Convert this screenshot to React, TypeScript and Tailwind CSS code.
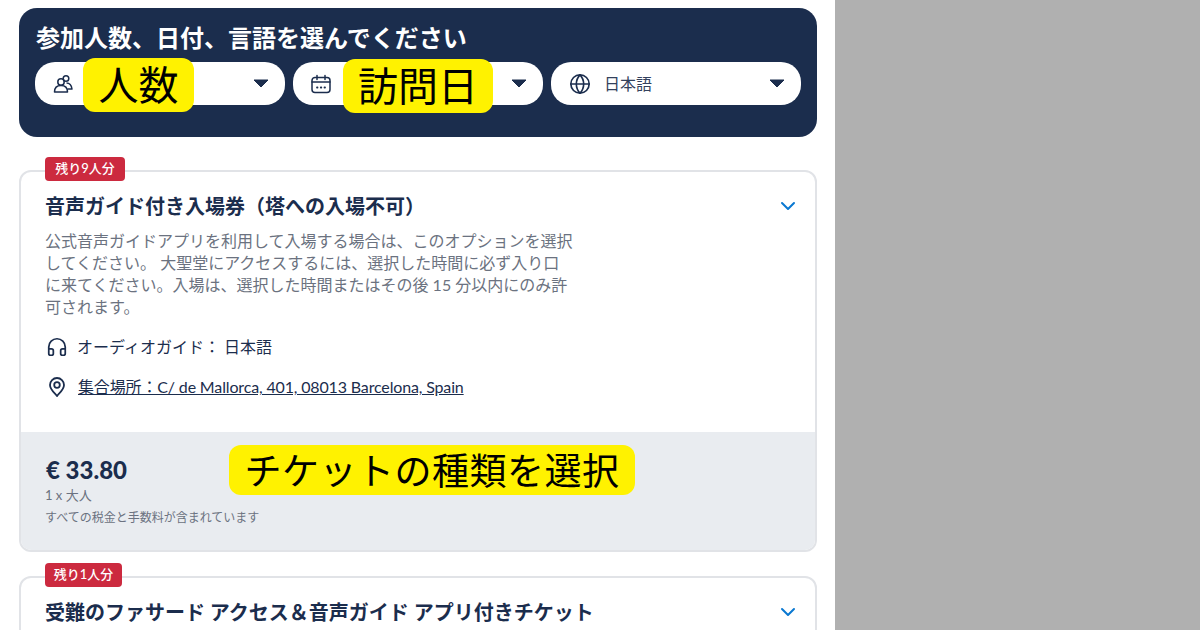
import { ChevronDown, Globe, Headphones } from "lucide-react";

const font = "font-['Lato','Noto_Sans_CJK_JP',sans-serif]";

function Caret() {
  return (
    <svg width="16" height="9" viewBox="0 0 16 9" className="ml-auto shrink-0">
      <path d="M1 1h14l-7 7z" fill="#1b2d4d" stroke="#1b2d4d" strokeLinejoin="round" />
    </svg>
  );
}

function PeopleIcon() {
  return (
    <svg width="20" height="20" viewBox="0 0 20 20" fill="none" stroke="#1b2d4d" strokeWidth="1.500" strokeLinejoin="round">
      <circle cx="8" cy="8" r="3.200" />
      <circle cx="13" cy="4.500" r="2.800" />
      <path d="M1.500 18c0-4 2.500-6.500 6.500-6.500s6.500 2.500 6.500 6.500z" />
      <path d="M13.500 9c3 0 5 2.500 5.500 6h-4.500" />
    </svg>
  );
}

function CalendarIcon() {
  return (
    <svg width="20" height="20" viewBox="0 0 20 20" fill="none" stroke="#1b2d4d" strokeWidth="1.500" strokeLinecap="round">
      <rect x="1" y="3.500" width="18" height="15" rx="3" />
      <path d="M1 8h18M6 1.500v4M14 1.500v4" />
      <path d="M6 13.500h.5M9.800 13.500h.5M13.500 13.500h.5" strokeWidth="1.800" />
    </svg>
  );
}

function PinIcon() {
  return (
    <svg width="20" height="20" viewBox="0 0 20 20" fill="none" stroke="#1b2d4d" strokeWidth="1.800" className="ml-[2px]">
      <path d="M10 19c-1-1.800-7-6-7-11a7 7 0 0 1 14 0c0 5-6 9.200-7 11z" strokeLinejoin="round" />
      <circle cx="10" cy="8" r="2.800" />
    </svg>
  );
}

function Select({ icon, label }: { icon: React.ReactNode; label?: string }) {
  return (
    <div className="flex h-[43px] w-[250px] shrink-0 items-center rounded-[20px] bg-white pl-[18px] pr-[16px]">
      {icon}
      {label && <span className="ml-[13px] text-[16px] text-[#33415c]">{label}</span>}
      <Caret />
    </div>
  );
}

function Badge({ text, width }: { text: string; width: string }) {
  return (
    <span className={`absolute left-[24px] top-[-15px] flex h-[24px] items-center justify-center rounded-[4px] bg-[#cc2a3f] text-[13px] font-medium text-white ${width}`}>
      {text}
    </span>
  );
}

export default function App() {
  return (
    <div className={`relative flex h-[630px] w-[1200px] overflow-hidden bg-white ${font}`}>
      <div className="w-[835px] shrink-0 pl-[19px] pr-[18px] pt-[8px]">
        <div className="h-[129px] rounded-[18px] bg-[#1b2d4d] px-[16px] pt-[14px]">
          <h2 className="ml-[1px] text-[24px] font-bold leading-[32px] text-white">参加人数、日付、言語を選んでください</h2>
          <div className="mt-[8px] flex gap-[8px]">
            <Select icon={<PeopleIcon />} />
            <Select icon={<CalendarIcon />} />
            <Select icon={<Globe size={22} strokeWidth={1.800} color="#1b2d4d" />} label="日本語" />
          </div>
        </div>

        <div className="relative mt-[33px] h-[382px] rounded-[12px] border-2 border-[#e1e3e7]">
          <Badge text="残り9人分" width="w-[80px]" />
          <div className="h-[260px] px-[24px] pt-[20px]">
            <div className="flex items-center justify-between">
              <h3 className="text-[20px] font-bold leading-[28px] text-[#1b2d4d]">音声ガイド付き入場券（塔への入場不可）</h3>
              <ChevronDown size={24} strokeWidth={2} color="#0a78d1" className="mr-[-9px]" />
            </div>
            <p className="mt-[10px] w-[528px] text-[16px] leading-[22px] text-[#6b7280]">
              公式音声ガイドアプリを利用して入場する場合は、このオプションを選択してください。 大聖堂にアクセスするには、選択した時間に必ず入り口に来てください。入場は、選択した時間またはその後 15 分以内にのみ許可されます。
            </p>
            <div className="mt-[18px] flex items-center gap-[9px] text-[16px] leading-[22px] text-[#1b2d4d]">
              <Headphones size={22} strokeWidth={1.900} className="ml-[1px]" />
              <span>オーディオガイド： 日本語</span>
            </div>
            <div className="mt-[18px] flex items-center gap-[11px] text-[16px] leading-[22px] text-[#1b2d4d]">
              <PinIcon />
              <span className="tracking-[-0.15px] underline">集合場所：C/ de Mallorca, 401, 08013 Barcelona, Spain</span>
            </div>
          </div>
          <div className="h-[118px] rounded-b-[10px] bg-[#e9ecf0] px-[24px] pt-[24px]">
            <div className="ml-[1px] text-[24px] font-black leading-[28px] text-[#1b2d4d]">€ 33.80</div>
            <div className="mt-[1px] text-[13px] leading-[20px] text-[#6b7280]">1 x 大人</div>
            <div className="mt-[5px] text-[12px] leading-[16px] text-[#6b7280]">すべての税金と手数料が含まれています</div>
          </div>
        </div>

        <div className="relative mt-[24px] h-[200px] rounded-[12px] border-2 border-[#e1e3e7]">
          <Badge text="残り1人分" width="w-[77px]" />
          <div className="flex items-center justify-between px-[24px] pt-[20px]">
            <h3 className="text-[20px] font-bold leading-[28px] text-[#1b2d4d]">受難のファサード アクセス＆音声ガイド アプリ付きチケット</h3>
            <ChevronDown size={24} strokeWidth={2} color="#0a78d1" className="mr-[-9px]" />
          </div>
        </div>
      </div>
      <div className="flex-1 bg-[#b0b0b0]" />

      <div className="absolute left-[83px] top-[58px] flex h-[54px] w-[111px] items-center justify-center rounded-[12px] bg-[#fff200] text-[40px] leading-none text-black">人数</div>
      <div className="absolute left-[343px] top-[59px] flex h-[54px] w-[150px] items-center justify-center rounded-[12px] bg-[#fff200] text-[40px] leading-none text-black">訪問日</div>
      <div className="absolute left-[229px] top-[445px] flex h-[50px] w-[406px] items-center justify-center rounded-[12px] bg-[#fff200] text-[37px] leading-none tracking-[0.5px] text-black">チケットの種類を選択</div>
    </div>
  );
}
